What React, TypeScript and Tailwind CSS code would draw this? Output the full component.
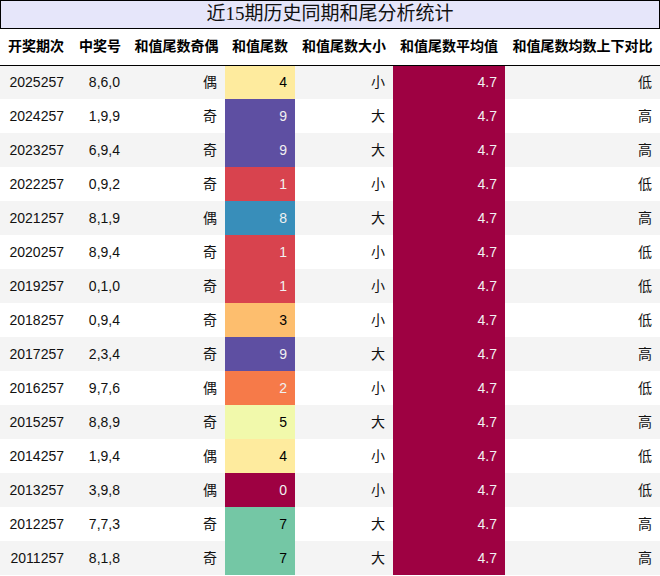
interface Row {
  period: string
  nums: string
  parity: string
  tail: number
  size: string
  compare: string
}

const rows: Row[] = [
  { period: '2025257', nums: '8,6,0', parity: '偶', tail: 4, size: '小', compare: '低' },
  { period: '2024257', nums: '1,9,9', parity: '奇', tail: 9, size: '大', compare: '高' },
  { period: '2023257', nums: '6,9,4', parity: '奇', tail: 9, size: '大', compare: '高' },
  { period: '2022257', nums: '0,9,2', parity: '奇', tail: 1, size: '小', compare: '低' },
  { period: '2021257', nums: '8,1,9', parity: '偶', tail: 8, size: '大', compare: '高' },
  { period: '2020257', nums: '8,9,4', parity: '奇', tail: 1, size: '小', compare: '低' },
  { period: '2019257', nums: '0,1,0', parity: '奇', tail: 1, size: '小', compare: '低' },
  { period: '2018257', nums: '0,9,4', parity: '奇', tail: 3, size: '小', compare: '低' },
  { period: '2017257', nums: '2,3,4', parity: '奇', tail: 9, size: '大', compare: '高' },
  { period: '2016257', nums: '9,7,6', parity: '偶', tail: 2, size: '小', compare: '低' },
  { period: '2015257', nums: '8,8,9', parity: '奇', tail: 5, size: '大', compare: '高' },
  { period: '2014257', nums: '1,9,4', parity: '偶', tail: 4, size: '小', compare: '低' },
  { period: '2013257', nums: '3,9,8', parity: '偶', tail: 0, size: '小', compare: '低' },
  { period: '2012257', nums: '7,7,3', parity: '奇', tail: 7, size: '大', compare: '高' },
  { period: '2011257', nums: '8,1,8', parity: '奇', tail: 7, size: '大', compare: '高' },
]

// spectral gradient, one class per tail digit
const tailCls: Record<number, string> = {
  0: 'bg-[#9e0142] text-[#f1f1f1]',
  1: 'bg-[#d8434e] text-[#f1f1f1]',
  2: 'bg-[#f67a49] text-[#f1f1f1]',
  3: 'bg-[#fdbe6e] text-black',
  4: 'bg-[#feeb9e] text-black',
  5: 'bg-[#f1f9ab] text-black',
  6: 'bg-[#cdeb9e] text-black',
  7: 'bg-[#74c7a5] text-black',
  8: 'bg-[#388eba] text-[#f1f1f1]',
  9: 'bg-[#5e4fa2] text-[#f1f1f1]',
}

const headers = ['开奖期次', '中奖号', '和值尾数奇偶', '和值尾数', '和值尾数大小', '和值尾数平均值', '和值尾数均数上下对比']

export default function App() {
  return (
    <div className="w-[660px] bg-white text-[#111] font-['Liberation_Sans','Noto_Sans_CJK_SC',sans-serif]">
      <div className="h-[29px] border border-black bg-[#e6e6fa] text-center text-[19px] leading-[26px] font-['Liberation_Serif','Noto_Sans_CJK_SC',serif]">
        近15期历史同期和尾分析统计
      </div>
      <table className="w-[660px] table-fixed border-collapse text-[14px]">
        <colgroup>
          <col className="w-[72px]" />
          <col className="w-[56px]" />
          <col className="w-[97px]" />
          <col className="w-[70px]" />
          <col className="w-[98px]" />
          <col className="w-[112px]" />
          <col className="w-[155px]" />
        </colgroup>
        <thead>
          <tr className="h-[36px] border-b border-black">
            {headers.map((h) => (
              <th key={h} className="px-1 text-center font-bold text-black whitespace-nowrap">
                {h}
              </th>
            ))}
          </tr>
        </thead>
        <tbody>
          {rows.map((r, i) => (
            <tr key={r.period} className={`h-[34px] ${i % 2 === 0 ? 'bg-[#f4f4f4]' : 'bg-white'}`}>
              <td className="pr-2 text-right">{r.period}</td>
              <td className="pr-2 text-right">{r.nums}</td>
              <td className="pr-2 text-right">{r.parity}</td>
              <td className={`pr-2 text-right ${tailCls[r.tail]}`}>{r.tail}</td>
              <td className="pr-2 text-right">{r.size}</td>
              <td className="pr-2 text-right bg-[#9e0142] text-[#f1f1f1]">4.7</td>
              <td className="pr-2 text-right">{r.compare}</td>
            </tr>
          ))}
        </tbody>
      </table>
    </div>
  )
}
